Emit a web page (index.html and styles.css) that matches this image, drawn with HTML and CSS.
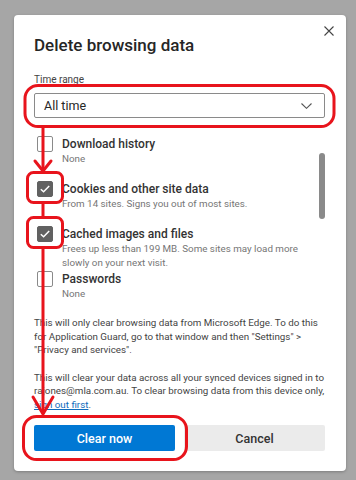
FILE: index.html
```html
<!DOCTYPE html>
<html lang="en">
  <head>
    <meta charset="UTF-8" />
    <meta name="viewport" content="width=device-width, initial-scale=1.0" />
    <title>Delete browsing data</title>
    <link rel="stylesheet" href="styles.css">
  </head>
  <body>
    <div class="dialog">
      <header class="dialog-head">
        <h1>Delete browsing data</h1>
        <button class="close" aria-label="Close">
          <svg width="10" height="10" viewBox="0 0 10 10">
            <path d="M0.5 0.5 L9.5 9.5 M9.5 0.5 L0.5 9.5" stroke="#444" stroke-width="1.1" fill="none" />
          </svg>
        </button>
      </header>

      <p class="field-label">Time range</p>
      <div class="select">
        <span>All time</span>
        <svg width="11" height="6" viewBox="0 0 11 6">
          <path d="M0.5 0.5 L5.5 5.3 L10.5 0.5" stroke="#555" stroke-width="1.1" fill="none" />
        </svg>
      </div>

      <div class="list">
        <ul class="options">
          <li class="option">
            <span class="box"></span>
            <div>
              <p class="opt-title">Download history</p>
              <p class="opt-sub">None</p>
            </div>
          </li>
          <li class="option">
            <span class="box checked">
              <svg width="10" height="8" viewBox="0 0 10 8"><path d="M0.8 4.2 L3.6 6.8 L9.2 1" stroke="#fff" stroke-width="1.5" fill="none" /></svg>
            </span>
            <div>
              <p class="opt-title">Cookies and other site data</p>
              <p class="opt-sub">From 14 sites. Signs you out of most sites.</p>
            </div>
          </li>
          <li class="option">
            <span class="box checked">
              <svg width="10" height="8" viewBox="0 0 10 8"><path d="M0.8 4.2 L3.6 6.8 L9.2 1" stroke="#fff" stroke-width="1.5" fill="none" /></svg>
            </span>
            <div>
              <p class="opt-title">Cached images and files</p>
              <p class="opt-sub">Frees up less than 199 MB. Some sites may load more slowly on your next visit.</p>
            </div>
          </li>
          <li class="option">
            <span class="box"></span>
            <div>
              <p class="opt-title">Passwords</p>
              <p class="opt-sub">None</p>
            </div>
          </li>
        </ul>
        <div class="scrollbar"><span class="thumb"></span></div>
      </div>

      <p class="note">This will only clear browsing data from Microsoft Edge. To do this for Application Guard, go to that window and then "Settings" &gt; "Privacy and services".</p>
      <p class="note">This will clear your data across all your synced devices signed in to rajones@mla.com.au. To clear browsing data from this device only, <a href="#">sign out first</a>.</p>

      <div class="actions">
        <button class="btn primary">Clear now</button>
        <button class="btn secondary">Cancel</button>
      </div>
    </div>

    <!-- red markup drawn over the screenshot -->
    <svg class="marks" width="356" height="480" viewBox="0 0 356 480">
      <g fill="none" stroke="#e8141c" stroke-width="3" stroke-linejoin="round" stroke-linecap="round">
        <rect x="25" y="85.5" width="309" height="41" rx="13" />
        <path d="M43 127 V171" />
        <path d="M35 161 L43 171 L51 161" />
        <rect x="27.5" y="172.5" width="35" height="30" rx="6" />
        <path d="M43 203 V217" />
        <rect x="27.5" y="217.5" width="35" height="30" rx="6" />
        <path d="M43 248 V413" />
        <path d="M33 397 L43 414 L53 397" />
        <rect x="23.5" y="416.5" width="163" height="43" rx="13" />
      </g>
    </svg>
  </body>
</html>
```

FILE: styles.css
```css
body {
  margin: 0;
  width: 356px;
  height: 480px;
  background-color: #a6a6a6;
  font-family: Roboto, "Noto Sans", sans-serif;
  color: #242424;
  position: relative;
  overflow: hidden;
}
p {
  margin: 0;
}
.dialog {
  box-sizing: border-box;
  width: 332px;
  height: 456px;
  margin: 15px 0 0 14px;
  padding: 11px 21px 20px 20px;
  background-color: #fff;
  border-radius: 4px;
  box-shadow: 0 1px 3px rgba(0, 0, 0, 0.25);
  display: flex;
  flex-direction: column;
}
.dialog-head {
  display: flex;
  justify-content: space-between;
  align-items: flex-start;
}
.dialog-head h1 {
  margin: 7px 0 0;
  font-size: 17px;
  font-weight: 500;
  line-height: 24px;
  color: #262626;
}
.close {
  border: none;
  background: none;
  padding: 0;
  margin: 0 -9px 0 0;
  width: 10px;
  height: 10px;
  display: flex;
}
.field-label {
  margin-top: 16px;
  font-size: 10px;
  line-height: 14px;
  color: #444;
}
.select {
  box-sizing: border-box;
  height: 25px;
  margin-top: 6px;
  border: 1px solid #8a8a8a;
  border-radius: 2px;
  padding: 0 12px 0 9px;
  display: flex;
  align-items: center;
  justify-content: space-between;
  font-size: 12.5px;
  color: #262626;
}
.list {
  height: 170px;
  margin-top: 18px;
  display: flex;
  overflow: hidden;
}
.options {
  flex: 1;
  list-style: none;
  margin: 0;
  padding: 0 0 0 3px;
}
.option {
  min-height: 45px;
  display: flex;
  gap: 9px;
}
.box {
  box-sizing: border-box;
  flex: none;
  width: 16px;
  height: 16px;
  border: 1px solid #8a8a8a;
  border-radius: 2px;
  display: flex;
  align-items: center;
  justify-content: center;
}
.box.checked {
  background-color: #616161;
  border-color: #616161;
}
.opt-title {
  font-size: 12px;
  font-weight: 500;
  line-height: 16px;
  color: #333;
}
.opt-sub {
  font-size: 9.8px;
  line-height: 14px;
  color: #767676;
  padding-right: 14px;
}
.scrollbar {
  width: 6px;
  flex: none;
}
.thumb {
  display: block;
  width: 6px;
  height: 66px;
  margin-top: 17px;
  border-radius: 3px;
  background-color: #8a8a8a;
}
.note {
  margin-top: 10px;
  font-size: 9.8px;
  line-height: 13.5px;
  color: #444;
}
.note + .note {
  margin-top: 14px;
}
.note a {
  color: #0f6cbd;
}
.actions {
  margin-top: auto;
  display: flex;
  gap: 9px;
}
.btn {
  flex: 1;
  height: 26px;
  border: none;
  border-radius: 2px;
  font-family: inherit;
  font-size: 12.5px;
  font-weight: 500;
}
.primary {
  background-color: #0078d4;
  color: #fff;
}
.secondary {
  background-color: #ebebeb;
  color: #333;
}
.marks {
  position: absolute;
  top: 0;
  left: 0;
  pointer-events: none;
}
```
